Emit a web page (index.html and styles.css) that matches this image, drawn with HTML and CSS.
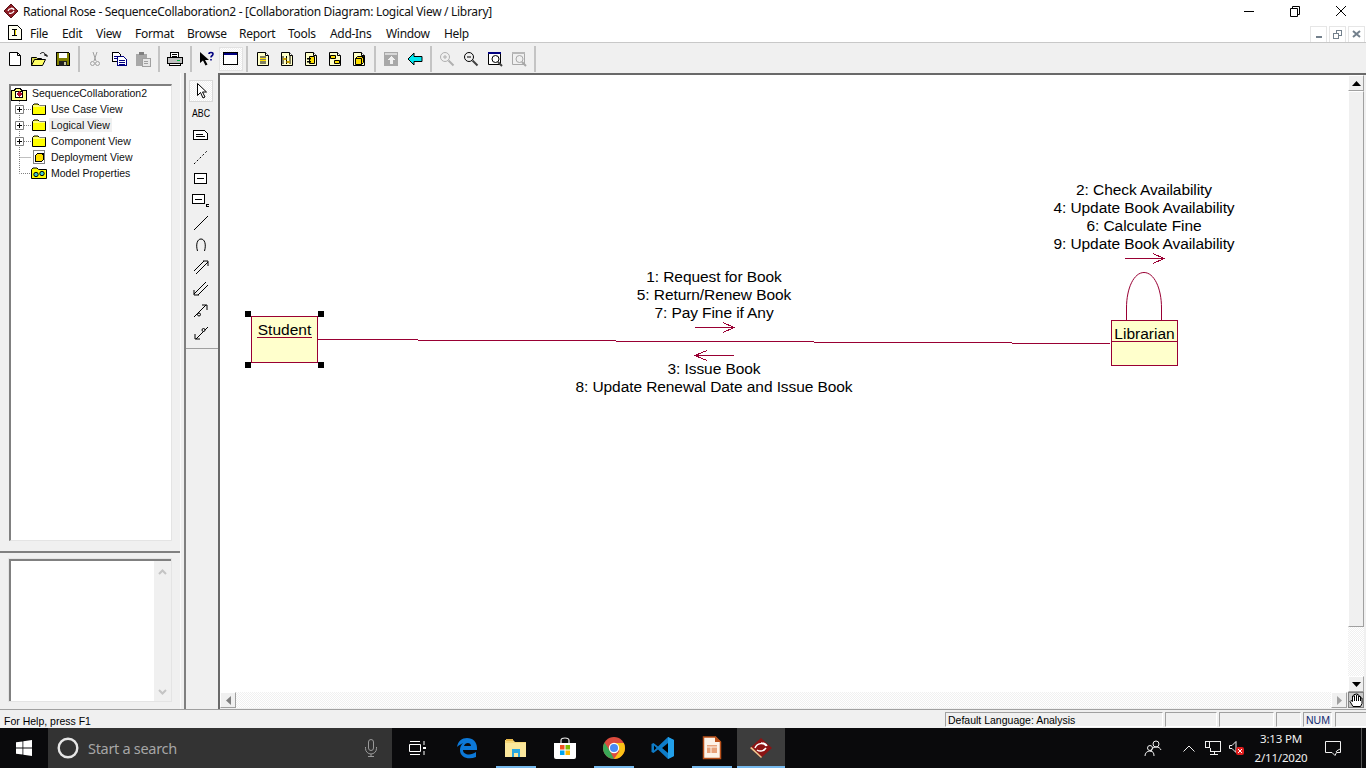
FILE: index.html
```html
<!DOCTYPE html>
<html lang="en">
<head>
  <meta charset="UTF-8" />
  <title>Rational Rose - SequenceCollaboration2</title>
  <link rel="stylesheet" href="styles.css">
</head>
<body>

  <!-- shared icons -->
  <svg class="sprite" width="0" height="0">
    <symbol id="i-folder" viewBox="0 0 16 16"><path d="M1.5 13.5V4.5L3 3h4l1.5 1.5h6v9z" fill="#ffff00" stroke="#000"/><path d="M2 5h12" stroke="#fff"/></symbol>
    <symbol id="i-page" viewBox="0 0 16 16"><path d="M2.5 1.5h8l3 3v10h-11z" fill="#fff" stroke="#000"/><path d="M10.5 1.5v3h3" fill="none" stroke="#000"/></symbol>
    <symbol id="i-doc-base" viewBox="0 0 16 16"><path d="M2.5 1.5h8l3 3v10h-11z" fill="#ffffc8" stroke="#000"/><path d="M10.5 1.5v3h3" fill="#fff" stroke="#000"/></symbol>
    <symbol id="i-expander" viewBox="-3 0 20 16"><path d="M5.5 0v16M10 8.5h7" stroke="#808080" stroke-dasharray="1 1"/><path d="M1.5 4.5h8v8h-8z" fill="#fff" stroke="#808080"/><path d="M3 8.5h5M5.5 6v5" stroke="#000"/></symbol>
  </svg>

  <div class="app">

    <div class="titlebar">
      <svg class="rose-logo" width="16" height="16" viewBox="0 0 16 16"><path d="M8 1l7 7-7 7-7-7z" fill="#8c1c24" stroke="#5a1015"/><path d="M5 8c1-3 5-3 6-1M6 10c2 1 4 0 5-2M8 5c2 0 3 1 3 2" fill="none" stroke="#fff" stroke-width="1.2"/></svg>
      <span class="title-text">Rational Rose - SequenceCollaboration2 - [Collaboration Diagram: Logical View / Library]</span>
      <div class="win-btns">
        <svg width="46" height="20" viewBox="0 0 46 20"><path d="M18 10.5h10" stroke="#000"/></svg>
        <svg width="46" height="20" viewBox="0 0 46 20"><path d="M18.5 7.5h7v8h-7zM20.5 7.5v-2h7v8h-2" fill="none" stroke="#000"/></svg>
        <svg width="46" height="20" viewBox="0 0 46 20"><path d="M18 5l10 10M28 5l-10 10" stroke="#000"/></svg>
      </div>
    </div>

    <div class="menubar">
      <svg class="doc-icon" width="14" height="15" viewBox="0 0 14 15" shape-rendering="crispEdges"><path d="M.5.5h9l4 4v10H.5z" fill="#fffff0" stroke="#000"/><path d="M4 4h5v1H7v5h2v1H4v-1h2V5H4z" fill="#000"/><path d="M7 5h1v5H7z" fill="#e8d800"/></svg>
      <span class="menu-item m-file">File</span>
      <span class="menu-item m-edit">Edit</span>
      <span class="menu-item m-view">View</span>
      <span class="menu-item m-format">Format</span>
      <span class="menu-item m-browse">Browse</span>
      <span class="menu-item m-report">Report</span>
      <span class="menu-item m-tools">Tools</span>
      <span class="menu-item m-addins">Add-Ins</span>
      <span class="menu-item m-window">Window</span>
      <span class="menu-item">Help</span>
      <div class="mdi-btns">
        <div class="mdi-btn"><svg width="8" height="8" viewBox="0 0 8 8" shape-rendering="crispEdges"><path d="M1 6h6v2H1z" fill="#73808c"/></svg></div>
        <div class="mdi-btn"><svg width="9" height="9" viewBox="0 0 9 9" shape-rendering="crispEdges"><path d="M.5 3.5h5v5h-5zM3.5 3V.5h5v5H6" fill="none" stroke="#73808c"/><path d="M1 3h4v1H1zM4 0h4v1H4z" fill="#73808c"/></svg></div>
        <div class="mdi-btn"><svg width="9" height="8" viewBox="0 0 9 8"><path d="M1 1l7 6M8 1L1 7" stroke="#73808c" stroke-width="2"/></svg></div>
      </div>
    </div>

    <div class="toolbar">
      <span class="tb"><svg width="16" height="16"><use href="#i-page"/></svg></span>
      <span class="tb"><svg width="18" height="16" viewBox="0 0 18 16"><path d="M1.5 14.5V6.5h5l1 1h4v2" fill="#d8d850" stroke="#000"/><path d="M1.5 14.5l3-6h11l-3 6z" fill="#ffff66" stroke="#000"/><path d="M10 3c2-2 4-2 5 0l1 2" fill="none" stroke="#000"/><path d="M14 4h3v2" fill="none" stroke="#000"/></svg></span>
      <span class="tb"><svg width="16" height="16" viewBox="0 0 16 16" shape-rendering="crispEdges"><path d="M1.5 1.5h12l1 1v12h-13z" fill="#808000" stroke="#000"/><path d="M4 2h8v5H4z" fill="#fff"/><path d="M4 10h8v5H4z" fill="#222"/><path d="M9 11h2v3H9z" fill="#c8c8a0"/></svg></span>
      <span class="tb-sep"></span>
      <span class="tb"><svg width="16" height="16" viewBox="0 0 16 16" fill="none" stroke="#a0a0a0"><path d="M6 1l3 9M10 1L7 10"/><circle cx="5.5" cy="12.5" r="2"/><circle cx="10.5" cy="12.5" r="2"/></svg></span>
      <span class="tb"><svg width="17" height="16" viewBox="0 0 17 16" shape-rendering="crispEdges"><path d="M1.5 1.5h6l2 2v7h-8z" fill="#fff" stroke="#000"/><path d="M6.5 5.5h6l3 3v6h-9z" fill="#fff" stroke="#000080"/><path d="M8 9h6M8 11h6M8 13h6M3 5h3M3 7h3" stroke="#000080"/></svg></span>
      <span class="tb"><svg width="16" height="16" viewBox="0 0 16 16" shape-rendering="crispEdges"><path d="M1 3h11v12H1z" fill="#a8a8a8"/><path d="M4 1h5v3H4z" fill="#808080"/><path d="M7 7h8v8H7z" fill="#e8e8e8" stroke="#a0a0a0"/><path d="M9 10h4M9 12h4" stroke="#a0a0a0"/></svg></span>
      <span class="tb-sep"></span>
      <span class="tb"><svg width="18" height="16" viewBox="0 0 18 16" shape-rendering="crispEdges"><path d="M4.5 1.5h8v5h-8z" fill="#fff" stroke="#000"/><path d="M1.5 6.5h15v6h-15z" fill="#c0c0c0" stroke="#000"/><path d="M3.5 12.5h11v2h-11z" fill="#fff" stroke="#000"/><path d="M11 9h3v1h-3z" fill="#00c040"/><path d="M6 3h5M6 5h5" stroke="#000"/></svg></span>
      <span class="tb-sep"></span>
      <span class="tb"><svg width="16" height="16" viewBox="0 0 16 16"><path d="M1 1v11l3-2.5 2.5 5 2-1L6 9h4z" fill="#000"/><path d="M10 3c0-2 4-2 4 0 0 2-2 1.5-2 3.5M12 8v1.5" fill="none" stroke="#000080" stroke-width="1.6"/></svg></span>
      <span class="tb tb-on"><svg width="16" height="16" viewBox="0 0 16 16" shape-rendering="crispEdges"><path d="M.5 1.5h14v12H.5z" fill="#fff" stroke="#000"/><path d="M1 2h13v2H1z" fill="#000080"/></svg></span>
      <span class="tb-sep"></span>
      <span class="tb"><svg width="16" height="16"><use href="#i-doc-base"/><path d="M5 6h6M5 8h6M5 10h6M5 12h6" stroke="#000"/><path d="M5 7h6v1H5zM5 9h6v1H5z" fill="#ffe000"/></svg></span>
      <span class="tb"><svg width="16" height="16"><use href="#i-doc-base"/><path d="M4 5v8M7.5 5v8M11 5v8" stroke="#000"/><path d="M4 8h3.5M7.5 11H11" stroke="#c8a000" stroke-width="2"/></svg></span>
      <span class="tb"><svg width="16" height="16"><use href="#i-doc-base"/><path d="M6.5 5.5h5v7h-5z" fill="#ffe000" stroke="#000"/><path d="M4 7h4v1.5H4zM4 10h4v1.5H4z" fill="#000"/></svg></span>
      <span class="tb"><svg width="16" height="16"><use href="#i-doc-base"/><path d="M3.5 4.5h5v3h-5zM7.5 9.5h5v3h-5z" fill="#ffe000" stroke="#000"/></svg></span>
      <span class="tb"><svg width="16" height="16"><use href="#i-doc-base"/><path d="M4.5 7.5h6v6h-6zM4.5 7.5l2-2h6v6l-2 2M10.5 7.5l2-2" fill="#ffe000" stroke="#000"/></svg></span>
      <span class="tb-sep"></span>
      <span class="tb"><svg width="16" height="16" viewBox="0 0 16 16" shape-rendering="crispEdges"><path d="M1 1h14v14H1z" fill="#a8a8a8"/><path d="M2 2h12v2H2z" fill="#d8d8d8"/><path d="M8 5l4 4H9.5v4h-3V9H4z" fill="#f0f0f0"/></svg></span>
      <span class="tb"><svg width="16" height="14" viewBox="0 0 16 14"><path d="M1 7l6-6v3.5h8v5H7V13z" fill="#00e8f0" stroke="#000"/></svg></span>
      <span class="tb-sep"></span>
      <span class="tb"><svg width="16" height="16" viewBox="0 0 16 16" fill="none" stroke="#b0b0b0"><circle cx="6" cy="6" r="4.5"/><path d="M4 6h4M6 4v4"/><path d="M9.5 9.5l5 5" stroke-width="2"/></svg></span>
      <span class="tb"><svg width="16" height="16" viewBox="0 0 16 16" fill="none" stroke="#000"><circle cx="6" cy="6" r="4.5"/><path d="M4 6h4"/><path d="M9.5 9.5l5 5" stroke-width="2" stroke="#404040"/></svg></span>
      <span class="tb"><svg width="16" height="16" viewBox="0 0 16 16" fill="none" stroke="#000"><path d="M1.5 1.5h12v12h-12z" fill="#fff"/><path d="M1 1h13v2H1z" fill="#000080" stroke="none"/><circle cx="8.5" cy="8" r="3.5"/><path d="M11 11l4 4" stroke-width="2" stroke="#404040"/></svg></span>
      <span class="tb"><svg width="16" height="16" viewBox="0 0 16 16" fill="none" stroke="#a8a8a8"><path d="M1.5 1.5h12v12h-12z"/><path d="M1 1h13v2H1z" fill="#b8b8b8" stroke="none"/><circle cx="8.5" cy="8" r="3.5"/><path d="M11 11l4 4" stroke-width="2"/></svg></span>
      <span class="tb-sep"></span>
    </div>

    <div class="main">

      <div class="leftpanel">
        <ul class="tree">
          <li class="tree-row">
            <svg class="root-icon" width="16" height="15" viewBox="0 0 16 15" shape-rendering="crispEdges"><path d="M.5 4.5h3l1-2h5l1 2h5v10H.5z" fill="#ffff80" stroke="#000"/><path d="M4.5 5.5h7v6h-7z" fill="#fff" stroke="#000"/><path d="M8 5l3 3-3 3-3-3z" fill="#b01030"/></svg>
            <span class="tree-label">SequenceCollaboration2</span>
          </li>
          <li class="tree-row">
            <svg width="20" height="16"><use href="#i-expander"/></svg>
            <svg width="16" height="16"><use href="#i-folder"/></svg>
            <span class="tree-label">Use Case View</span>
          </li>
          <li class="tree-row">
            <svg width="20" height="16"><use href="#i-expander"/></svg>
            <svg width="16" height="16"><use href="#i-folder"/></svg>
            <span class="tree-label tree-sel">Logical View</span>
          </li>
          <li class="tree-row">
            <svg width="20" height="16"><use href="#i-expander"/></svg>
            <svg width="16" height="16"><use href="#i-folder"/></svg>
            <span class="tree-label">Component View</span>
          </li>
          <li class="tree-row">
            <svg width="20" height="16" viewBox="-3 0 20 16"><path d="M5.5 0v16M5.5 8.5h12" stroke="#808080" stroke-dasharray="1 1"/></svg>
            <svg width="16" height="16" viewBox="0 0 16 16" shape-rendering="crispEdges"><path d="M2.5 1.5h11v13h-11z" fill="#fff" stroke="#808080"/><path d="M4.5 6.5h6v6h-6z" fill="#ffe000" stroke="#000"/><path d="M4.5 6.5l2-2h6v6l-2 2M10.5 6.5l2-2" fill="#ffe000" stroke="#000"/></svg>
            <span class="tree-label">Deployment View</span>
          </li>
          <li class="tree-row">
            <svg width="20" height="16" viewBox="-3 0 20 16"><path d="M5.5 0v8.5h12" fill="none" stroke="#808080" stroke-dasharray="1 1"/></svg>
            <svg width="16" height="16" viewBox="0 0 16 16"><path d="M.5 13.5V4.5L2 3h4l1.5 1.5h8v9z" fill="#ffff00" stroke="#000"/><circle cx="5" cy="9.500" r="2.200" fill="#40c8c8" stroke="#000"/><circle cx="11" cy="8.500" r="2.200" fill="#40c8c8" stroke="#000"/></svg>
            <span class="tree-label">Model Properties</span>
          </li>
        </ul>
        <div class="splitter"></div>
        <div class="docbox">
          <div class="docbox-text"></div>
          <div class="docbox-scroll">
            <svg width="9" height="6" viewBox="0 0 9 6"><path d="M1 5l3.5-3.5L8 5" fill="none" stroke="#c4c4c4" stroke-width="2"/></svg>
            <svg width="9" height="6" viewBox="0 0 9 6"><path d="M1 1l3.5 3.5L8 1" fill="none" stroke="#c4c4c4" stroke-width="2"/></svg>
          </div>
        </div>
      </div>

      <div class="toolbox">
        <span class="tool tool-on"><svg width="16" height="18" viewBox="0 0 16 18"><path d="M4.5 1.5v12l3-3 2.5 5.5 2-1-2.5-5h4z" fill="#fff" stroke="#000"/></svg></span>
        <span class="tool tool-abc">ABC</span>
        <span class="tool"><svg width="16" height="12" viewBox="0 0 16 12" shape-rendering="crispEdges"><path d="M.5 1.5h11l3 3v6H.5z" fill="#fff" stroke="#000"/><path d="M3 5h7M3 7h9" stroke="#000"/></svg></span>
        <span class="tool"><svg width="16" height="16" viewBox="0 0 16 16"><path d="M1 15L15 1" stroke="#000" stroke-dasharray="2 2"/></svg></span>
        <span class="tool"><svg width="14" height="12" viewBox="0 0 14 12" shape-rendering="crispEdges"><path d="M.5.5h12v10H.5z" fill="#fff" stroke="#000"/><path d="M3 5.5h7" stroke="#000"/></svg></span>
        <span class="tool"><svg width="18" height="14" viewBox="0 0 18 14" shape-rendering="crispEdges"><path d="M.5.5h12v9H.5z" fill="#fff" stroke="#000"/><path d="M3 5h7" stroke="#000"/><path d="M14 10h3v1h-2v1h2v1h-3z" fill="#000"/></svg></span>
        <span class="tool"><svg width="16" height="16" viewBox="0 0 16 16"><path d="M1 15L15 1" stroke="#000"/></svg></span>
        <span class="tool"><svg width="12" height="14" viewBox="0 0 12 14"><path d="M2.5 13C.5 6 2.5 1 6 1s5.500 5 3.500 12" fill="none" stroke="#000"/></svg></span>
        <span class="tool"><svg width="16" height="16" viewBox="0 0 16 16" fill="none" stroke="#000"><path d="M1 12L11 2M3 15L15 3"/><path d="M10 2h5v5"/></svg></span>
        <span class="tool"><svg width="16" height="16" viewBox="0 0 16 16" fill="none" stroke="#000"><path d="M15 4L5 14M13 1L1 13"/><path d="M1 9v5h5"/></svg></span>
        <span class="tool"><svg width="16" height="16" viewBox="0 0 16 16" fill="none" stroke="#000"><path d="M1 14L13 2"/><circle cx="6" cy="11.5" r="1.5" fill="#f0f0f0"/><path d="M9 2h5v5"/></svg></span>
        <span class="tool"><svg width="16" height="16" viewBox="0 0 16 16" fill="none" stroke="#000"><path d="M15 2L3 14"/><circle cx="10.5" cy="5" r="1.5" fill="#f0f0f0"/><path d="M2 9v5h5"/></svg></span>
        <span class="toolbox-rule"></span>
      </div>

      <div class="workspace">
        <div class="workspace-top">
          <div class="canvas">
            <svg class="wires" width="1128" height="617" viewBox="220 75 1128 617" fill="none" stroke="#990033" shape-rendering="crispEdges">
              <path d="M318 339.5h100M418 340.5h198M616 341.5h198M814 342.5h198M1012 343.5h98"/>
              <path d="M695 327.5h39M723 322.5l11 5-11 5"/>
              <path d="M734 355.5h-39M707 350.5l-12 5 12 5"/>
              <path d="M1125 258.5h39M1153 253.5l11 5-11 5"/>
              <path shape-rendering="auto" d="M1126.5 320V308C1126.5 288 1134 272.5 1144 272.5S1161.5 288 1161.5 308V320"/>
            </svg>

            <div class="msg msg-self">2: Check Availability<br>4: Update Book Availability<br>6: Calculate Fine<br>9: Update Book Availability</div>
            <div class="msg msg-fwd">1: Request for Book<br>5: Return/Renew Book<br>7: Pay Fine if Any</div>
            <div class="msg msg-back">3: Issue Book<br>8: Update Renewal Date and Issue Book</div>

            <div class="obj"><span class="obj-name">Student</span></div>
            <span class="handle h-tl"></span><span class="handle h-tr"></span>
            <span class="handle h-bl"></span><span class="handle h-br"></span>

            <div class="cls"><div class="cls-name">Librarian</div></div>
          </div>
          <div class="vscroll">
            <span class="sb-btn"><svg width="9" height="5" viewBox="0 0 9 5"><path d="M4.5 0L9 5H0z" fill="#000"/></svg></span>
            <span class="sb-thumb"></span>
            <span class="sb-track"></span>
            <span class="sb-btn"><svg width="9" height="5" viewBox="0 0 9 5"><path d="M0 0h9L4.5 5z" fill="#000"/></svg></span>
          </div>
        </div>
        <div class="hscroll">
          <span class="sb-btn"><svg width="5" height="9" viewBox="0 0 5 9"><path d="M5 0v9L0 4.5z" fill="#808080"/></svg></span>
          <span class="sb-track"></span>
          <span class="sb-btn"><svg width="5" height="9" viewBox="0 0 5 9"><path d="M0 0v9l5-4.5z" fill="#a0a0a0"/></svg></span>
          <span class="sb-corner"><svg width="14" height="14" viewBox="0 0 14 14"><path d="M4 13.5L1 8.500l1-1 1.5 1V3h1.500V1.500h1.500V1H8.500v1H10v1.500h1.500V5H13v5.500l-1.500 3z" fill="#fff" stroke="#000"/><path d="M5.500 3v5M7.500 2v6M9.500 3v5M11.500 5v3" stroke="#000"/></svg></span>
        </div>
      </div>
    </div>

    <div class="statusbar">
      <span class="st-help">For Help, press F1</span>
      <span class="st-cell st-lang">Default Language: Analysis</span>
      <span class="st-cell st-a"></span>
      <span class="st-cell st-b"></span>
      <span class="st-cell st-c"></span>
      <span class="st-cell st-num">NUM</span>
      <span class="st-cell st-last"></span>
    </div>

    <div class="taskbar">
      <span class="start">
        <svg width="16" height="16" viewBox="0 0 16 16"><path d="M0 2.300l6.500-.9v6.200H0zM7.300 1.300L16 0v7.600H7.300zM0 8.400h6.500v6.200L0 13.700zM7.300 8.400H16V16l-8.700-1.200z" fill="#fff"/></svg>
      </span>
      <div class="search">
        <svg width="22" height="22" viewBox="0 0 22 22"><circle cx="11" cy="11" r="9.300" fill="none" stroke="#e6e6e6" stroke-width="2.400"/></svg>
        <span class="search-text">Start a search</span>
        <svg class="mic" width="14" height="18" viewBox="0 0 14 18" fill="none" stroke="#9a9a9a"><rect x="4.5" y=".5" width="5" height="11" rx="2.5"/><path d="M1.5 8v1.5a5.500 5.500 0 0 0 11 0V8M7 15v2.500M4 17.500h6"/></svg>
      </div>
      <span class="task"><svg width="18" height="16" viewBox="0 0 18 16" fill="none" stroke="#fff"><path d="M.5 4.500h11v7H.5zM1 1.500h10M1 14.500h10M15 1v4M15 11v4"/><path d="M14 7h3v2h-3z" fill="#fff" stroke="none"/></svg></span>
      <span class="task"><svg width="22" height="22" viewBox="0 0 22 22"><path d="M1 10C2 4 6 1 11 1c6 0 10 4 10 10v2H7c0 5 8 6 13 2v5c-7 3-16 1-16-7 0-3 1-5 3-7-2 1-5 3-6 4zm7-1h7c0-4-6-4-7 0z" fill="#0c78d8"/></svg></span>
      <span class="task task-open"><svg width="22" height="20" viewBox="0 0 22 20"><path d="M0 2h8l2 2h11v15H0z" fill="#f5d77a"/><path d="M0 5h21v14H0z" fill="#fbe79c"/><path d="M1 1h7v2H1z" fill="#e8b84a"/><path d="M7 11h8v8h-2v-4H9v4H7z" fill="#29a8e0"/></svg></span>
      <span class="task"><svg width="22" height="22" viewBox="0 0 22 22"><path d="M7 6V3.500C7 1.500 8.500 1 11 1s4 .5 4 2.500V6" fill="none" stroke="#e8e8e8" stroke-width="1.200"/><path d="M0 6h22v14a2 2 0 0 1-2 2H2a2 2 0 0 1-2-2z" fill="#fff"/><path d="M6 8h4.500v4.500H6z" fill="#f25022"/><path d="M11.500 8H16v4.500h-4.500z" fill="#7fba00"/><path d="M6 13.500h4.500V18H6z" fill="#00a4ef"/><path d="M11.500 13.500H16V18h-4.500z" fill="#ffb900"/></svg></span>
      <span class="task task-open"><svg width="22" height="22" viewBox="0 0 22 22"><circle cx="11" cy="11" r="11" fill="#dd4b3e"/><path d="M11 22a11 11 0 0 1-9.500-16.500L7 14z" fill="#3aa757"/><path d="M22 11a11 11 0 0 1-11 11l5.500-8L11 6h9.800c.8 1.500 1.200 3.200 1.200 5z" fill="#fbc116"/><circle cx="11" cy="11" r="5.200" fill="#fff"/><circle cx="11" cy="11" r="4" fill="#4a8af4"/></svg></span>
      <span class="task"><svg width="24" height="24" viewBox="0 0 24 24"><path d="M17 1l6 3v16l-6 3-10-9.500L2.500 17 .5 16V8l2-1L7 10.500z" fill="#0e7cc8"/><path d="M17 1l6 3v16l-6 3zM17 7l-6 5 6 5z" fill="#22a0ea"/><path d="M17 7l-6 5 6 5z" fill="#000"/><path d="M3 9.500v5l2.500-2.500z" fill="#000"/></svg></span>
      <span class="task task-open"><svg width="20" height="24" viewBox="0 0 20 24"><path d="M1.500 1h12l5 5v16.500h-17z" fill="#fdf3e8" stroke="#b8501a" stroke-width="1.5"/><path d="M13 0l6 6h-6z" fill="#b8501a"/><path d="M5 9h10v8H5z" fill="#e8a27a"/><path d="M5 11h10M9 11v6" stroke="#fdf3e8"/></svg></span>
      <span class="task task-active"><svg width="24" height="22" viewBox="0 0 24 22"><path d="M12 1l11 10-11 10L1 11z" fill="#8c1414"/><path d="M1 11l11 10 1-1L2.500 10z" fill="#e8c890"/><path d="M6 11c2-5 9-6 11-2M8 13c3 2 7 1 9-2M12 6c3 0 5 1 6 3" fill="none" stroke="#fff" stroke-width="1.5"/></svg></span>

      <div class="tray">
        <svg class="tray-people" width="18" height="18" viewBox="0 0 18 18" fill="none" stroke="#f0f0f0"><circle cx="12" cy="5" r="3"/><path d="M7 13c0-3 2-5 5-5s4 1 5 3"/><circle cx="6" cy="9" r="2.5"/><path d="M1 17c0-3 2-5 5-5s4 2 4 5"/></svg>
        <svg class="tray-caret" width="12" height="7" viewBox="0 0 12 7"><path d="M.5 6.500L6 1l5.500 5.500" fill="none" stroke="#f0f0f0"/></svg>
        <svg class="tray-net" width="16" height="16" viewBox="0 0 16 16" fill="none" stroke="#f0f0f0" shape-rendering="crispEdges"><path d="M3.5 1.5h12v10h-10v-4"/><path d="M.5 1.5h4v6h-4zM5 14.500h8M9.500 11.500v3"/></svg>
        <svg class="tray-sound" width="16" height="14" viewBox="0 0 16 14"><path d="M.5 4.500h2.500l4-4v11l-4-4H.5z" fill="none" stroke="#f0f0f0"/><rect x="7" y="6" width="8" height="8" rx="2" fill="#e01e1e"/><path d="M9 8l4 4M13 8l-4 4" stroke="#fff"/></svg>
        <div class="clock"><span>3:13 PM</span><span>2/11/2020</span></div>
        <svg class="tray-notif" width="16" height="16" viewBox="0 0 16 16"><path d="M.5 1.500h15v11h-4l-1.500 3-3-3h-6.500z" fill="none" stroke="#f0f0f0"/><path d="M11 12c1-2 3-2 4-3" stroke="#f0f0f0" fill="none"/></svg>
        <span class="show-desktop"></span>
      </div>
    </div>

  </div>

</body>
</html>
```

FILE: styles.css
```css
html, body {
  margin: 0;
  padding: 0;
  height: 768px;
  overflow: hidden;
}
body {
  font-family: "Liberation Sans", Arial, sans-serif;
  font-size: 10.5px;
  color: #000;
  background: #f0f0f0;
}
svg {
  display: block;
  flex: none;
}
.sprite {
  position: absolute;
}
.app {
  display: flex;
  flex-direction: column;
  width: 1366px;
  height: 768px;
}

/* title and menu */
.titlebar {
  display: flex;
  align-items: center;
  height: 22px;
  flex: none;
  background: #fff;
  padding-left: 3px;
}
.title-text {
  margin-left: 4px;
  font-family: "Noto Sans", sans-serif;
  font-size: 12px;
  white-space: nowrap;
  letter-spacing: -0.3px;
  color: #111;
}
.win-btns {
  display: flex;
  margin-left: auto;
  margin-right: 2px;
}
.menubar {
  display: flex;
  align-items: center;
  height: 20px;
  flex: none;
  background: #fff;
  padding-left: 8px;
}
.doc-icon {
  margin-right: 8px;
}
.menu-item {
  flex: none;
  margin-top: 2px;
  font-family: "Noto Sans", sans-serif;
  font-size: 12px;
  letter-spacing: -0.3px;
  color: #111;
  white-space: nowrap;
}
.m-file { width: 32px; }
.m-edit { width: 34px; }
.m-view { width: 39px; }
.m-format { width: 52px; }
.m-browse { width: 52px; }
.m-report { width: 49px; }
.m-tools { width: 42px; }
.m-addins { width: 56px; }
.m-window { width: 58px; }
.mdi-btns {
  display: flex;
  gap: 2px;
  margin-left: auto;
  margin-right: 1px;
  margin-top: 4px;
}
.mdi-btn {
  display: flex;
  align-items: center;
  justify-content: center;
  width: 15px;
  height: 15px;
  border: 1px solid #e6e6e6;
  background: #fff;
}

/* main toolbar */
.toolbar {
  display: flex;
  align-items: center;
  height: 31px;
  flex: none;
  box-sizing: border-box;
  border-top: 1px solid #c8c8c8;
  padding: 2px 0 0 3px;
  background: #f0f0f0;
}
.tb {
  display: flex;
  align-items: center;
  justify-content: center;
  width: 24px;
  height: 24px;
  box-sizing: border-box;
}
.tb-on {
  border: 1px solid #e2e2e2;
  background: repeating-conic-gradient(#fff 0 25%, #f0f0f0 0 50%) 0 0 / 2px 2px;
}
.tb-sep {
  width: 8px;
  height: 26px;
  background: linear-gradient(#c4c4c4, #c4c4c4) center / 2px 100% no-repeat;
}

/* middle area */
.main {
  display: flex;
  height: 637px;
  flex: none;
  box-sizing: border-box;
  border-bottom: 1px solid #a0a0a0;
}
.leftpanel {
  display: flex;
  flex-direction: column;
  width: 181px;
  margin-right: 3px;
  flex: none;
  box-sizing: border-box;
  padding-top: 11px;
  border-right: 1px solid #fafafa;
}
.tree {
  list-style: none;
  height: 457px;
  box-sizing: border-box;
  width: 163px;
  margin: 0 0 0 9px;
  padding: 0;
  background: #fff;
  border: 1px solid #e4e4e4;
  border-top: 2px solid #808080;
  border-left: 2px solid #808080;
}
.tree-row {
  display: flex;
  align-items: center;
  height: 16px;
}
.tree-row:first-child {
  margin-top: -1px;
}
.root-icon {
  margin-right: 3px;
}
.tree-label {
  margin-left: 2px;
  padding: 1px 2px;
  white-space: nowrap;
  color: #111;
}
.root-icon + .tree-label {
  margin-left: 0;
}
.tree-sel {
  background: #f0f0f0;
}
.splitter {
  width: 180px;
  height: 2px;
  margin-top: 10px;
  background: #808080;
  flex: none;
}
.docbox {
  display: flex;
  width: 164px;
  height: 144px;
  flex: none;
  box-sizing: border-box;
  margin: 5px 0 0 8px;
  border: 1px solid #e4e4e4;
}
.docbox-text {
  flex: 1;
  background: #fff;
  border-top: 2px solid #808080;
  border-left: 2px solid #808080;
}
.docbox-scroll {
  display: flex;
  flex-direction: column;
  justify-content: space-between;
  align-items: center;
  width: 17px;
  padding: 8px 0 6px;
  box-sizing: border-box;
  background: #f0f0f0;
  border-top: 2px solid #808080;
}

/* diagram toolbox */
.toolbox {
  display: flex;
  flex-direction: column;
  align-items: center;
  width: 34px;
  flex: none;
  box-sizing: border-box;
  padding: 7px 2px 0 0;
  border-left: 2px solid #808080;
}
.tool {
  display: flex;
  align-items: center;
  justify-content: center;
  width: 24px;
  height: 22px;
  flex: none;
  box-sizing: border-box;
}
.tool-on {
  border: 1px solid #d8d8d8;
  background: repeating-conic-gradient(#fff 0 25%, #f0f0f0 0 50%) 0 0 / 2px 2px;
}
.tool-abc {
  font-size: 11px;
  transform: scaleX(0.8);
}
.toolbox-rule {
  align-self: stretch;
  margin: 4px -2px 0 0;
  border-top: 1px solid #a0a0a0;
}

/* canvas and scrollbars */
.workspace {
  display: flex;
  flex-direction: column;
  flex: 1;
  min-width: 0;
  border-left: 2px solid #696969;
}
.workspace-top {
  display: flex;
  height: 619px;
  flex: none;
  box-sizing: border-box;
  border-top: 2px solid #696969;
}
.canvas {
  position: relative;
  width: 1128px;
  flex: none;
  background: #fff;
  overflow: hidden;
}
.wires {
  position: absolute;
  left: 0;
  top: 0;
}
.msg {
  position: absolute;
  width: 400px;
  font-size: 15.5px;
  letter-spacing: -0.08px;
  line-height: 18px;
  text-align: center;
  white-space: nowrap;
}
.msg-self { left: 724px; top: 106px; }
.msg-fwd { left: 294px; top: 193px; }
.msg-back { left: 294px; top: 285px; }
.obj {
  position: absolute;
  left: 31px;
  top: 241px;
  width: 67px;
  height: 47px;
  box-sizing: border-box;
  border: 1px solid #990033;
  background: #ffffcc;
  text-align: center;
  font-size: 15.5px;
  line-height: 14px;
  padding-top: 6px;
}
.obj-name {
  display: inline-block;
  border-bottom: 1px solid #990033;
  padding: 0 1px;
}
.handle {
  position: absolute;
  width: 6px;
  height: 6px;
  background: #000;
}
.h-tl { left: 25px; top: 236px; }
.h-tr { left: 98px; top: 236px; }
.h-bl { left: 25px; top: 287px; }
.h-br { left: 98px; top: 287px; }
.cls {
  position: absolute;
  left: 891px;
  top: 245px;
  width: 67px;
  height: 46px;
  box-sizing: border-box;
  border: 1px solid #990033;
  background: #ffffcc;
  font-size: 15.5px;
  text-align: center;
}
.cls-name {
  height: 20px;
  line-height: 26px;
  border-bottom: 1px solid #990033;
}
.vscroll {
  display: flex;
  flex-direction: column;
  width: 16px;
  flex: none;
}
.sb-btn {
  display: flex;
  align-items: center;
  justify-content: center;
  width: 16px;
  height: 16px;
  flex: none;
  box-sizing: border-box;
  background: #f0f0f0;
  border: 1px solid;
  border-color: #fff #a0a0a0 #a0a0a0 #fff;
}
.sb-thumb {
  height: 536px;
  flex: none;
  box-sizing: border-box;
  background: #f0f0f0;
  border: 1px solid;
  border-color: #fff #a0a0a0 #a0a0a0 #fff;
}
.sb-track {
  flex: 1;
  background: repeating-conic-gradient(#fff 0 25%, #f0f0f0 0 50%) 0 0 / 2px 2px;
}
.hscroll {
  display: flex;
  height: 16px;
  flex: none;
  margin-right: 2px;
}
.sb-corner {
  display: flex;
  align-items: center;
  justify-content: center;
  width: 16px;
  height: 16px;
  margin-left: 1px;
  box-sizing: border-box;
  background: #c8c8c8;
  border: 1px solid #808080;
}

/* status bar */
.statusbar {
  display: flex;
  align-items: flex-end;
  height: 18px;
  flex: none;
  box-sizing: border-box;
  padding: 0 0 1px 4px;
  line-height: 13px;
  background: #f0f0f0;
}
.st-help {
  width: 941px;
  flex: none;
  margin-bottom: -1px;
}
.st-cell {
  height: 15px;
  box-sizing: border-box;
  padding: 1px 0 0 2px;
  margin-right: 2px;
  border-top: 1px solid #a0a0a0;
  border-left: 1px solid #a0a0a0;
  border-right: 1px solid #fff;
  border-bottom: 1px solid #fff;
  flex: none;
}
.st-lang { width: 218px; }
.st-a { width: 52px; }
.st-b { width: 55px; }
.st-c { width: 25px; }
.st-num { width: 29px; margin-right: 3px; color: #102a70; }
.st-last { width: 32px; margin-right: 0; }

/* windows taskbar */
.taskbar {
  display: flex;
  align-items: center;
  height: 40px;
  flex: none;
  background: #0a0a0c;
}
.start {
  display: flex;
  align-items: center;
  justify-content: center;
  width: 48px;
  height: 40px;
}
.search {
  display: flex;
  align-items: center;
  width: 344px;
  height: 40px;
  margin-right: 1px;
  box-sizing: border-box;
  padding-left: 9px;
  background: #333;
}
.search-text {
  margin-left: 9px;
  font-family: "Noto Sans", sans-serif;
  font-size: 14.5px;
  letter-spacing: -0.3px;
  color: #a6a6a6;
}
.mic {
  margin-left: auto;
  margin-right: 14px;
}
.task {
  display: flex;
  align-items: center;
  justify-content: center;
  width: 49px;
  height: 40px;
  flex: none;
}
.task-open {
  background: linear-gradient(#76b9ed, #76b9ed) center bottom / 40px 2px no-repeat;
}
.task-active {
  margin-left: 1px;
  width: 48px;
  background: linear-gradient(#76b9ed, #76b9ed) center bottom / 100% 2px no-repeat, #3d3d3d;
}
.tray {
  display: flex;
  align-items: center;
  margin-left: auto;
  height: 40px;
  color: #f0f0f0;
}
.tray-people { margin-right: 21px; }
.tray-caret { margin-right: 10px; }
.tray-net { margin-right: 8px; }
.tray-sound { margin-right: 2px; }
.clock {
  display: flex;
  flex-direction: column;
  align-items: center;
  width: 68px;
  font-family: "Noto Sans", sans-serif;
  font-size: 11.5px;
  line-height: 19px;
  letter-spacing: -0.2px;
}
.tray-notif { margin: 0 20px 0 10px; }
.show-desktop {
  width: 1px;
  height: 40px;
  margin-right: 4px;
  background: #555;
}
```
